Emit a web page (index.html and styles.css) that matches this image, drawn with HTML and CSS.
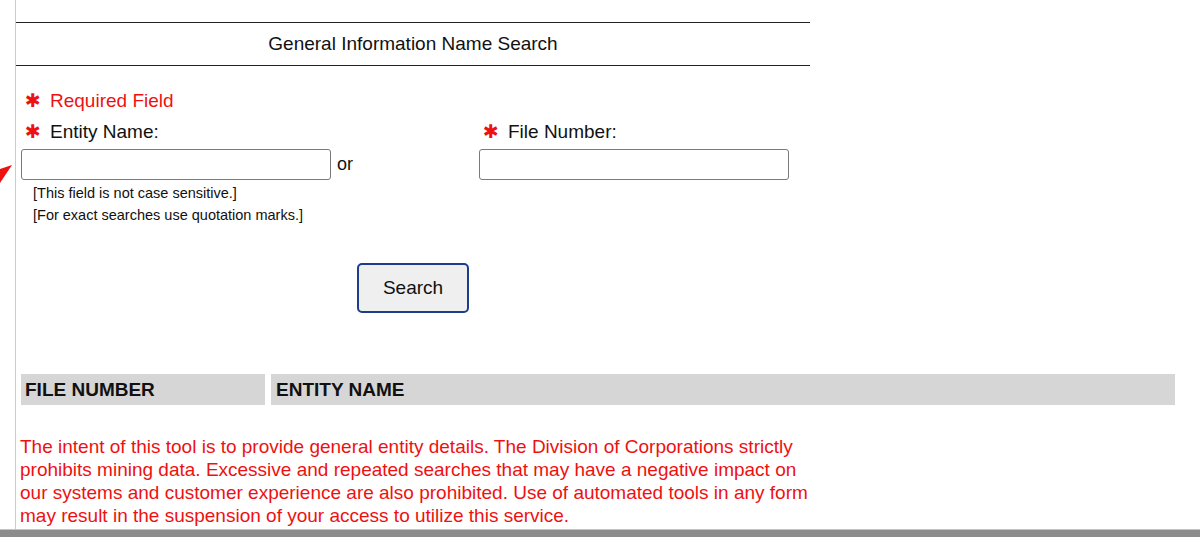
FILE: index.html
```html
<!DOCTYPE html>
<html lang="en">

<head>
    <meta charset="UTF-8">
    <meta name="viewport" content="width=device-width, initial-scale=1.0">
    <title>General Information Name Search</title>
    <link rel="stylesheet" href="styles.css">
</head>

<body>
    <div class="frame">
        <div class="gutter">
            <svg class="pointer" width="15" height="24" viewBox="0 0 15 24">
                <polygon points="0,6 12,2 0,20" fill="#ee1111" />
            </svg>
        </div>

        <div class="page">
            <div class="title">General Information Name Search</div>

            <form class="search-form" onsubmit="return false;">
                <div class="label required-note"><span class="star">&#x2731;</span>Required Field</div>
                <div></div>

                <div class="label"><span class="star">&#x2731;</span>Entity Name:</div>
                <div class="label"><span class="star">&#x2731;</span>File Number:</div>

                <div class="input-row">
                    <input type="text" class="text-input">
                    <span class="or">or</span>
                </div>
                <div class="input-row">
                    <input type="text" class="text-input">
                </div>

                <div class="hints">
                    <div>[This field is not case sensitive.]</div>
                    <div>[For exact searches use quotation marks.]</div>
                </div>
                <div></div>
            </form>

            <div class="button-row">
                <button type="button" class="search-btn">Search</button>
            </div>

            <div class="results-head">
                <div class="col col-file">FILE NUMBER</div>
                <div class="col col-name">ENTITY NAME</div>
            </div>

            <p class="notice">The intent of this tool is to provide general entity details. The Division of Corporations strictly prohibits mining data. Excessive and repeated searches that may have a negative impact on our systems and customer experience are also prohibited. Use of automated tools in any form may result in the suspension of your access to utilize this service.</p>
        </div>
    </div>

    <div class="bottom-bar"></div>
</body>

</html>
```

FILE: styles.css
```css
body {
    margin: 0;
    font-family: 'Liberation Sans', Arial, sans-serif;
    color: #111;
    background-color: #fff;
}

.frame {
    display: flex;
}

.gutter {
    width: 15px;
    flex-shrink: 0;
}

.pointer {
    display: block;
    margin-top: 163px;
}

.page {
    flex: 1;
    border-left: 1px solid #cbcbcb;
    padding-top: 22px;
    padding-bottom: 2px;
}

.title {
    width: 794px;
    height: 42px;
    line-height: 41px;
    text-align: center;
    font-size: 19px;
    border-top: 1px solid #222;
    border-bottom: 1px solid #222;
}

.search-form {
    display: grid;
    grid-template-columns: 458px 1fr;
    margin-top: 19px;
    padding-left: 5px;
}

.label {
    font-size: 19px;
    line-height: 31px;
    padding-left: 4px;
}

.required-note {
    color: #ee1111;
}

.star {
    display: inline-block;
    width: 25px;
    color: #ee1111;
    font-family: 'DejaVu Sans', sans-serif;
    font-size: 19px;
}

.input-row {
    display: flex;
    align-items: center;
    margin-top: 2px;
}

.text-input {
    width: 310px;
    height: 31px;
    box-sizing: border-box;
    border: 1px solid #7a7a7a;
    border-radius: 3px;
    margin: 0;
    font-size: 16px;
}

.or {
    margin-left: 6px;
    font-size: 18px;
}

.hints {
    margin-top: 2px;
    padding-left: 12px;
    font-size: 14.5px;
    line-height: 22px;
}

.button-row {
    width: 794px;
    text-align: center;
    margin-top: 37px;
}

.search-btn {
    width: 112px;
    height: 50px;
    font-family: 'Liberation Sans', Arial, sans-serif;
    font-size: 19px;
    color: #111;
    background-color: #efeff0;
    border: 2.5px solid #1b3e8c;
    border-radius: 5px;
}

.results-head {
    display: flex;
    gap: 6px;
    margin: 61px 25px 0 5px;
}

.col {
    height: 31px;
    line-height: 31px;
    background-color: #d6d6d6;
    font-size: 19px;
    font-weight: bold;
    padding-left: 4px;
    color: #111;
}

.col-file {
    width: 240px;
}

.col-name {
    flex: 1;
    padding-left: 5px;
}

.notice {
    width: 794px;
    margin: 30px 0 0 4px;
    font-size: 19px;
    line-height: 23px;
    color: #ee1111;
}

.bottom-bar {
    height: 7px;
    background-color: #8c8c8c;
    border-top: 1px solid #c2c2c2;
}
```
